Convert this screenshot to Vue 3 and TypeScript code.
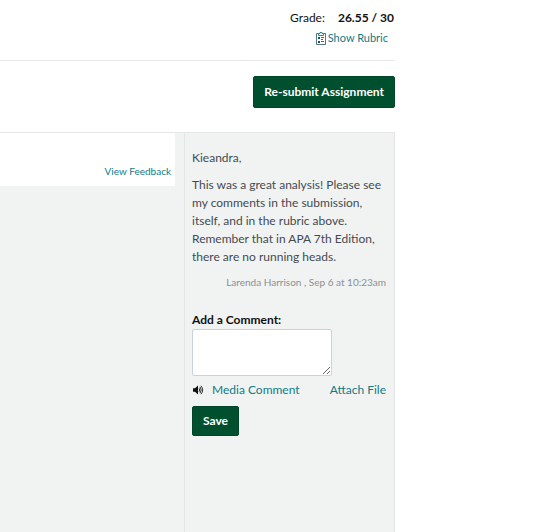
<script setup lang="ts">
import { ref } from 'vue'

const comment = ref('')
const feedback: string[] = [
  'Kieandra,',
  'This was a great analysis! Please see my comments in the submission, itself, and in the rubric above. Remember that in APA 7th Edition, there are no running heads.',
]
</script>

<template>
  <main class="page">
    <header class="summary">
      <div class="grade">
        <span>Grade:</span>
        <strong>26.55 / 30</strong>
      </div>
      <a class="rubric" href="#rubric">
        <svg width="12" height="13" viewBox="0 0 12 13" fill="none" aria-hidden="true">
          <path d="M3.5 1.5H1.5V12.5H10.5V1.5H8.5" stroke="#58757c" />
          <path d="M3.5 3.5V1.5H5V.5H7V1.5H8.5V3.5Z" stroke="#2b8792" />
          <path d="M3 5h2v2H3zM3 9h2v2H3z" fill="#14525e" />
          <path d="M6 5.5H9M6 7.5H8M6 9.5H9" stroke="#1f7682" />
        </svg>
        <span>Show Rubric</span>
      </a>
    </header>

    <div class="actions">
      <button class="btn resubmit" type="button">Re-submit Assignment</button>
    </div>

    <div class="details">
      <section class="submission">
        <div class="file">
          <a href="#feedback">View Feedback</a>
        </div>
      </section>

      <aside class="comments">
        <article class="comment">
          <p v-for="text in feedback" :key="text">{{ text }}</p>
          <footer>Larenda Harrison , Sep 6 at 10:23am</footer>
        </article>

        <form class="reply" @submit.prevent>
          <label for="comment">Add a Comment:</label>
          <textarea id="comment" v-model="comment"></textarea>
          <div class="attachments">
            <a class="media" href="#media">
              <svg width="12" height="10" viewBox="0 0 12 10" fill="none" aria-hidden="true">
                <path d="M1 3.2H3L6 .6V9.4L3 6.8H1Z" fill="#111" />
                <path d="M7 3.2Q8.4 5 7 6.8M8 1.8Q10.4 5 8 8.2M9 .8Q12.4 5 9 9.2" stroke="#333" />
              </svg>
              <span>Media Comment</span>
            </a>
            <a class="attach" href="#attach">Attach File</a>
          </div>
          <button class="btn save" type="submit">Save</button>
        </form>
      </aside>
    </div>
  </main>
</template>

<style>
body {
  margin: 0;
  background: #fff;
}
</style>

<style scoped>
.page {
  box-sizing: border-box;
  display: flex;
  flex-direction: column;
  min-height: 100vh;
  padding-right: 160px;
  font: 12px/18px Lato, "Liberation Sans", sans-serif;
  color: #444a50;
}

a {
  color: #0f7b86;
  text-decoration: none;
}

.summary {
  display: flex;
  flex-direction: column;
  align-items: flex-end;
  gap: 2px;
  padding: 9px 0 13px;
  border-bottom: 1px solid #e6e7e8;
  color: #111;
}

.grade {
  display: flex;
  gap: 13px;
  padding-right: 1px;
}

.rubric {
  display: flex;
  align-items: center;
  gap: 1px;
  margin-right: 7px;
  font-size: 11px;
}

.actions {
  display: flex;
  justify-content: flex-end;
  padding: 15px 0 24px;
}

.btn {
  box-sizing: border-box;
  border: 1px solid #00452a;
  border-radius: 2px;
  padding: 0 10px;
  background: #00502f;
  color: #fff;
  font: bold 12px/18px Lato, "Liberation Sans", sans-serif;
  cursor: pointer;
}

.resubmit {
  height: 32px;
}

.save {
  height: 30px;
}

.details {
  display: flex;
  flex: 1;
  border-top: 1px solid #e3e6e7;
  background: #f1f3f3;
}

.submission {
  flex: 1;
  padding-right: 9px;
}

.file {
  display: flex;
  justify-content: flex-end;
  padding: 29px 4px 6px;
  background: #fff;
  font-size: 10px;
}

.comments {
  box-sizing: border-box;
  width: 211px;
  padding: 16px 8px 24px 7px;
  border: solid #e3e6e7;
  border-width: 0 1px;
}

.comment p {
  margin: 0 0 9px;
}

.comment footer {
  margin-top: -2px;
  text-align: right;
  font-size: 10px;
  color: #8b8f92;
}

.reply {
  display: flex;
  flex-direction: column;
  align-items: flex-start;
  margin-top: 20px;
}

.reply label {
  font-weight: bold;
  color: #111;
}

.reply textarea {
  box-sizing: border-box;
  width: 140px;
  height: 47px;
  border: 1px solid #c7d3df;
  border-radius: 2px;
  background: #fff;
  font: inherit;
}

.attachments {
  display: flex;
  align-self: stretch;
  justify-content: space-between;
  padding: 5px 0 7px;
}

.media {
  display: flex;
  align-items: center;
  gap: 8px;
}
</style>
